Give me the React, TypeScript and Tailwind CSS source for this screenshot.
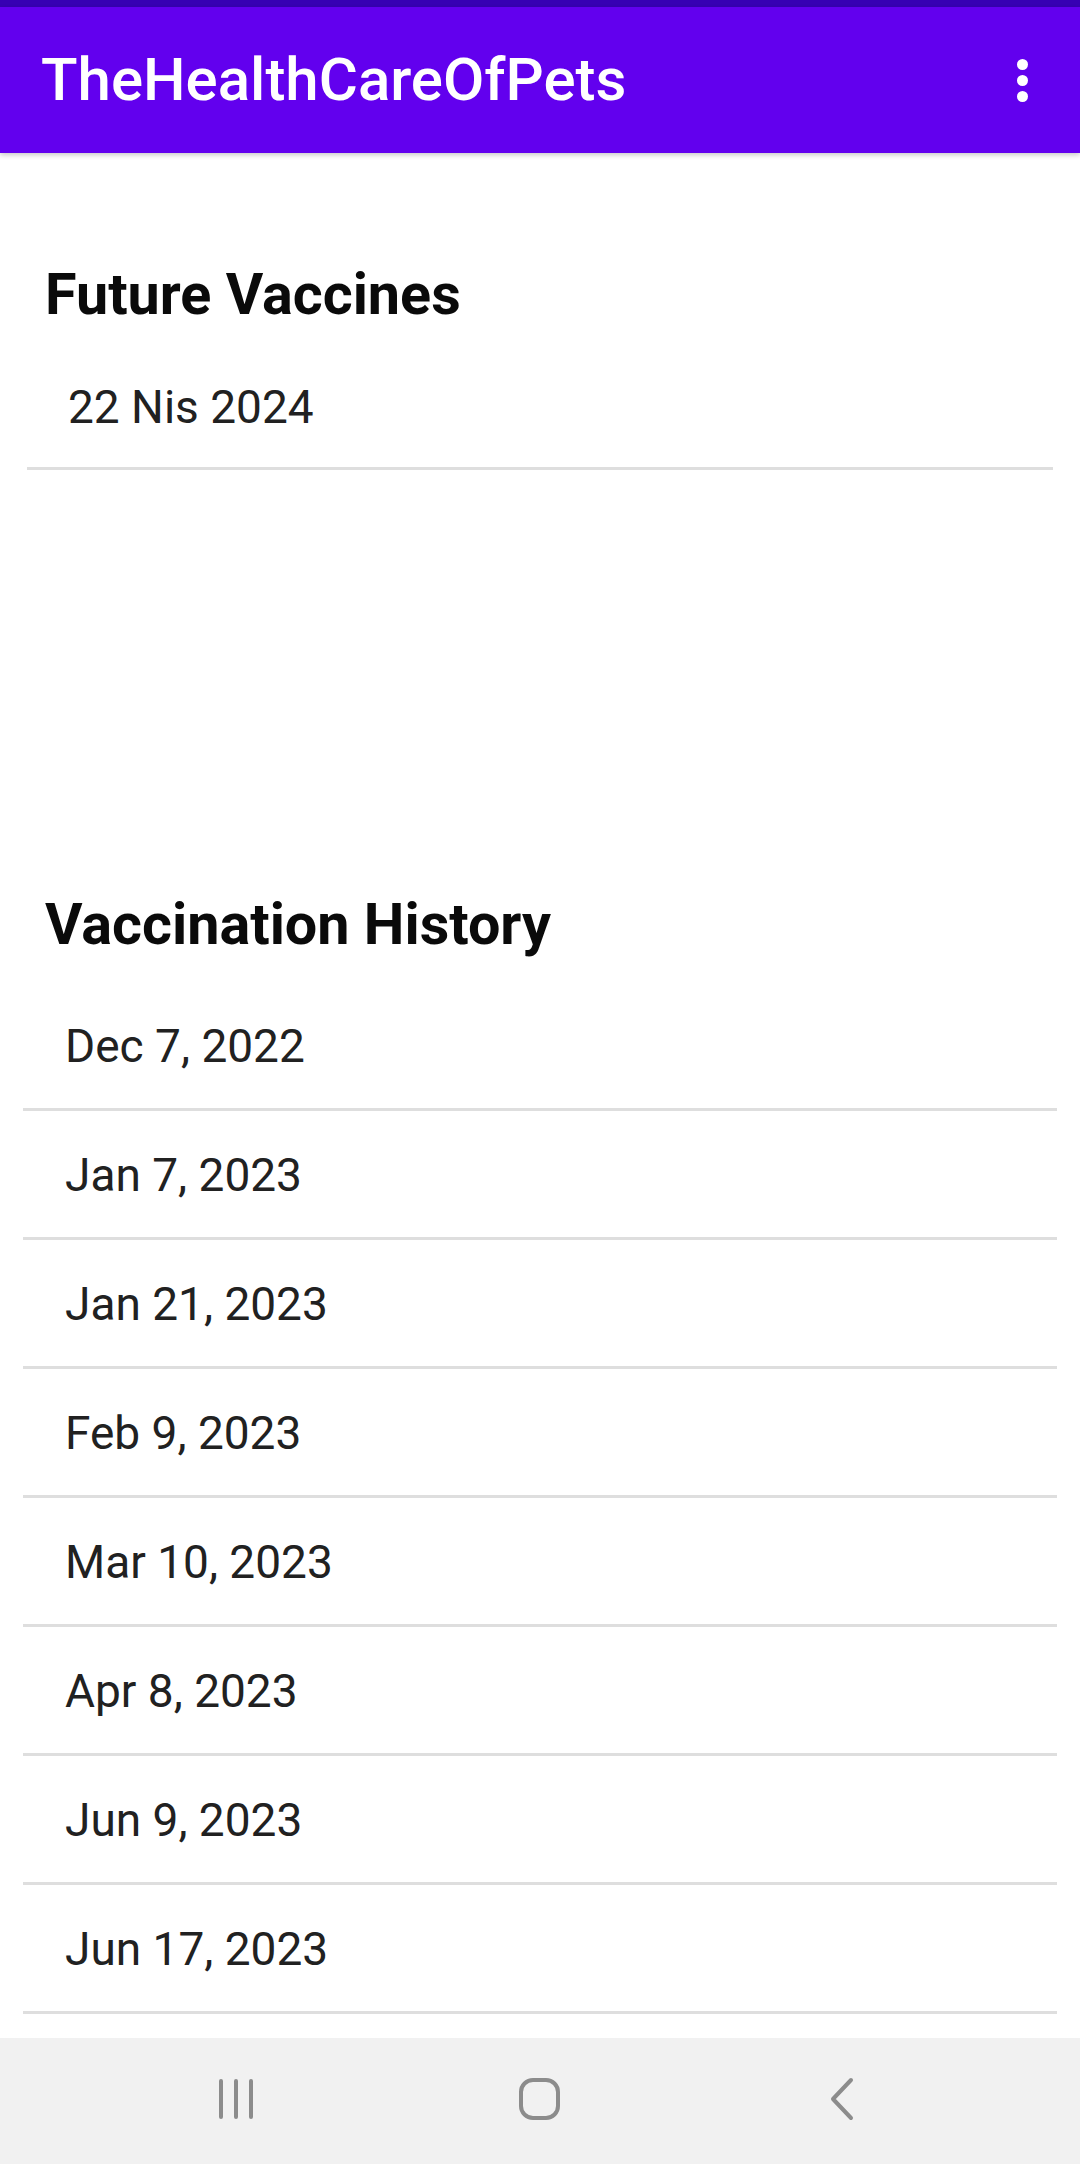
import React from "react";

const futureVaccines = ["22 Nis 2024"];

const history = [
  "Dec 7, 2022",
  "Jan 7, 2023",
  "Jan 21, 2023",
  "Feb 9, 2023",
  "Mar 10, 2023",
  "Apr 8, 2023",
  "Jun 9, 2023",
  "Jun 17, 2023",
];

function MoreIcon() {
  return (
    <div className="flex flex-col items-center gap-[5px]">
      <span className="block h-[11px] w-[11px] rounded-full bg-white" />
      <span className="block h-[11px] w-[11px] rounded-full bg-white" />
      <span className="block h-[11px] w-[11px] rounded-full bg-white" />
    </div>
  );
}

function NavBar() {
  return (
    <div className="relative h-[126px] shrink-0 bg-[#f1f1f1]">
      {/* recents */}
      <svg
        className="absolute left-[216px] top-[40px]"
        width="40"
        height="42"
        viewBox="0 0 40 42"
        fill="none"
        stroke="#8c8c8c"
        strokeWidth="4"
        strokeLinecap="round"
      >
        <path d="M5 3v36M20 3v36M35 3v36" />
      </svg>
      {/* home */}
      <svg
        className="absolute left-[517px] top-[38px]"
        width="46"
        height="46"
        viewBox="0 0 46 46"
        fill="none"
        stroke="#8c8c8c"
        strokeWidth="4"
      >
        <rect x="4" y="4" width="37" height="38" rx="12" />
      </svg>
      {/* back */}
      <svg
        className="absolute left-[826px] top-[38px]"
        width="30"
        height="46"
        viewBox="0 0 30 46"
        fill="none"
        stroke="#8c8c8c"
        strokeWidth="4"
        strokeLinecap="round"
        strokeLinejoin="round"
      >
        <path d="M25 4L7 23l18 19" />
      </svg>
    </div>
  );
}

export default function App() {
  return (
    <div className="flex h-[2164px] w-[1080px] flex-col overflow-hidden bg-white font-['Roboto',sans-serif]">
      {/* Status bar */}
      <div className="h-[7px] shrink-0 bg-[#3700b3]" />

      {/* App bar */}
      <div className="relative z-10 flex h-[146px] shrink-0 items-center justify-between bg-[#6200ee] pl-[41px] pr-[52px] shadow-[0_2px_5px_rgba(0,0,0,0.22)]">
        <h1 className="text-[60px] font-medium leading-none text-white">
          TheHealthCareOfPets
        </h1>
        <MoreIcon />
      </div>

      {/* Content */}
      <div className="flex-1 overflow-hidden">

        {/* Future vaccines */}

        <h2 className="mt-[113px] pl-[45px] text-[57.5px] font-bold leading-[57.5px] text-[#0a0a0a]">
          Future Vaccines
        </h2>

        <div className="mx-[27px] mt-[19px]">
          {futureVaccines.map((date) => (
            <div
              key={date}
              className="border-b-[3px] border-[#dedede] pb-[37px] pl-[41px] pt-[41px] text-[46px] leading-[46px] text-[#212121]"
            >
              {date}
            </div>
          ))}
        </div>

        {/* Vaccination history */}

        <h2 className="mt-[426px] pl-[45px] text-[57.5px] font-bold leading-[57.5px] text-[#0a0a0a]">
          Vaccination History
        </h2>

        <div className="mx-[23px] mt-[29px]">
          {history.map((date) => (
            <div
              key={date}
              className="border-b-[3px] border-[#dedede] pb-[39px] pl-[42px] pt-[41px] text-[46px] leading-[46px] text-[#212121]"
            >
              {date}
            </div>
          ))}
        </div>

      </div>

      <NavBar />
    </div>
  );
}
